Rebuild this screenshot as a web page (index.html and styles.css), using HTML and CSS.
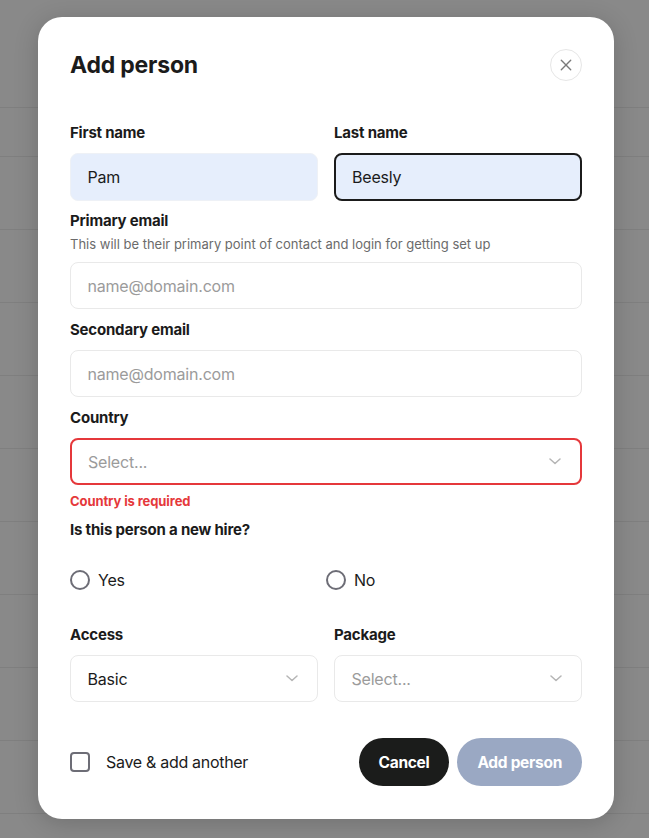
FILE: index.html
```html
<!DOCTYPE html>
<html lang="en">
<head>
<meta charset="utf-8">
<title>Add person</title>
<link rel="stylesheet" href="styles.css">
</head>
<body>
<div class="backdrop">
  <div class="bg-row first"></div>
  <div class="bg-row"></div>
  <div class="bg-row"></div>
  <div class="bg-row"></div>
  <div class="bg-row"></div>
  <div class="bg-row"></div>
  <div class="bg-row"></div>
  <div class="bg-row"></div>
  <div class="bg-row"></div>
  <div class="bg-row"></div>
  <div class="bg-row last"></div>
</div>

<div class="modal">
  <div class="modal-header">
    <h1 class="title">Add person</h1>
    <button class="close" type="button" aria-label="Close">
      <svg width="14" height="14" viewBox="0 0 14 14"><path d="M1.5 1.5 L12.5 12.5 M12.5 1.5 L1.5 12.5" stroke="#7a7a7a" stroke-width="1.6" stroke-linecap="round" fill="none"/></svg>
    </button>
  </div>

  <div class="grid2 names">
    <div class="field">
      <label class="label">First name</label>
      <div class="input name filled">Pam</div>
    </div>
    <div class="field">
      <label class="label">Last name</label>
      <div class="input name filled focused">Beesly</div>
    </div>
  </div>

  <div class="field group">
    <label class="label">Primary email</label>
    <div class="help">This will be their primary point of contact and login for getting set up</div>
    <div class="input placeholder">name@domain.com</div>
  </div>

  <div class="field group wide">
    <label class="label">Secondary email</label>
    <div class="input placeholder">name@domain.com</div>
  </div>

  <div class="field group wide">
    <label class="label">Country</label>
    <div class="input select error-border"><span class="placeholder-text">Select...</span>
      <svg class="chev" width="12" height="7" viewBox="0 0 12 7"><path d="M1 1 L6 5.5 L11 1" stroke="#b5b5b5" stroke-width="1.5" fill="none" stroke-linecap="round" stroke-linejoin="round"/></svg>
    </div>
    <div class="error">Country is required</div>
  </div>

  <div class="field group">
    <label class="label">Is this person a new hire?</label>
  </div>
  <div class="radios">
    <label class="radio"><span class="circle"></span>Yes</label>
    <label class="radio"><span class="circle"></span>No</label>
  </div>

  <div class="grid2 bottom-selects">
    <div class="field">
      <label class="label">Access</label>
      <div class="input select"><span>Basic</span>
        <svg class="chev" width="12" height="7" viewBox="0 0 12 7"><path d="M1 1 L6 5.5 L11 1" stroke="#b5b5b5" stroke-width="1.5" fill="none" stroke-linecap="round" stroke-linejoin="round"/></svg>
      </div>
    </div>
    <div class="field">
      <label class="label">Package</label>
      <div class="input select"><span class="placeholder-text">Select...</span>
        <svg class="chev" width="12" height="7" viewBox="0 0 12 7"><path d="M1 1 L6 5.5 L11 1" stroke="#b5b5b5" stroke-width="1.5" fill="none" stroke-linecap="round" stroke-linejoin="round"/></svg>
      </div>
    </div>
  </div>

  <div class="footer">
    <label class="check"><span class="box"></span>Save &amp; add another</label>
    <div class="actions">
      <button class="btn btn-dark" type="button">Cancel</button>
      <button class="btn btn-disabled" type="button">Add person</button>
    </div>
  </div>
</div>
</body>
</html>
```
FILE: styles.css
```css
* { box-sizing: border-box; }
html, body { margin: 0; padding: 0; }
body {
  width: 649px;
  height: 838px;
  overflow: hidden;
  background: #898989;
  font-family: Inter, "Noto Sans", sans-serif;
  color: #1b1b1b;
  position: relative;
}

.backdrop { padding-top: 107px; }
.bg-row { height: 73px; border-top: 1px solid #7f7f7f; }
.bg-row.first { height: 49px; }
.bg-row.last { height: 25px; }

.modal {
  position: absolute;
  top: 17px;
  left: 38px;
  width: 576px;
  height: 802px;
  background: #fff;
  border-radius: 24px;
  box-shadow: 0 4px 24px rgba(0,0,0,0.18);
  padding: 32px 32px 0 32px;
  display: flex;
  flex-direction: column;
}

.modal-header {
  display: flex;
  align-items: center;
  justify-content: space-between;
  height: 32px;
}
.title {
  margin: 0;
  font-size: 23px;
  font-weight: 700;
  letter-spacing: -0.2px;
  line-height: 32px;
}
.close {
  width: 32px;
  height: 32px;
  border-radius: 50%;
  border: 1.5px solid #e6e6e6;
  background: #fff;
  padding: 0;
  display: flex;
  align-items: center;
  justify-content: center;
}
.close svg { width: 12px; height: 12px; }

.grid2 {
  display: grid;
  grid-template-columns: 1fr 1fr;
  gap: 16px;
}
.names { margin-top: 42px; }

.field { display: flex; flex-direction: column; }
.group { margin-top: 10px; }
.group.wide { margin-top: 11px; }

.label {
  font-size: 15px;
  font-weight: 700;
  letter-spacing: -0.2px;
  line-height: 20px;
  margin-bottom: 10px;
}
.help {
  font-size: 13px;
  color: #6b6b6b;
  line-height: 18px;
  margin-top: -6px;
  margin-bottom: 9px;
  letter-spacing: 0px;
}

.input {
  height: 47px;
  border: 1.5px solid #e9e9e9;
  border-radius: 8px;
  padding: 0 16.5px;
  display: flex;
  align-items: center;
  font-size: 16px;
  letter-spacing: -0.2px;
  color: #1b1b1b;
  background: #fff;
}
.input.name { height: 48px; }
.input.filled {
  background: #e6eefc;
  border-color: #eef1f6;
}
.input.focused {
  border: 2px solid #1b1b1b;
  padding: 0 16px;
}
.input.placeholder, .placeholder-text { color: #9b9b9b; }
.select { justify-content: space-between; }
.chev { margin-right: 3px; }
.error-border { border: 2px solid #e5383b; padding: 0 16px; }

.error {
  margin-top: 7px;
  font-size: 13px;
  font-weight: 700;
  color: #e5383b;
  line-height: 18px;
  letter-spacing: -0.1px;
}

.radios {
  display: grid;
  grid-template-columns: 1fr 1fr;
  margin-top: 20px;
  height: 20px;
}
.radio {
  display: flex;
  align-items: center;
  gap: 8px;
  font-size: 16px;
  letter-spacing: -0.2px;
}
.circle {
  width: 20px;
  height: 20px;
  border-radius: 50%;
  border: 2px solid #6d6d76;
}

.bottom-selects { margin-top: 35px; }

.footer {
  margin-top: 36px;
  display: flex;
  align-items: center;
  justify-content: space-between;
}
.check {
  display: flex;
  align-items: center;
  gap: 16px;
  font-size: 16px;
  letter-spacing: -0.3px;
  color: #1b1b1b;
}
.box {
  width: 20px;
  height: 20px;
  border: 2px solid #6d6d76;
  border-radius: 4px;
}
.actions { display: flex; gap: 8px; }
.btn {
  height: 48px;
  border-radius: 24px;
  border: none;
  padding: 0 20px;
  font-family: Inter, "Noto Sans", sans-serif;
  font-size: 15.5px;
  font-weight: 700;
  letter-spacing: -0.3px;
  color: #fff;
}
.btn-dark { background: #1b1c1b; }
.btn-disabled { background: #9aa8c3; }
```
